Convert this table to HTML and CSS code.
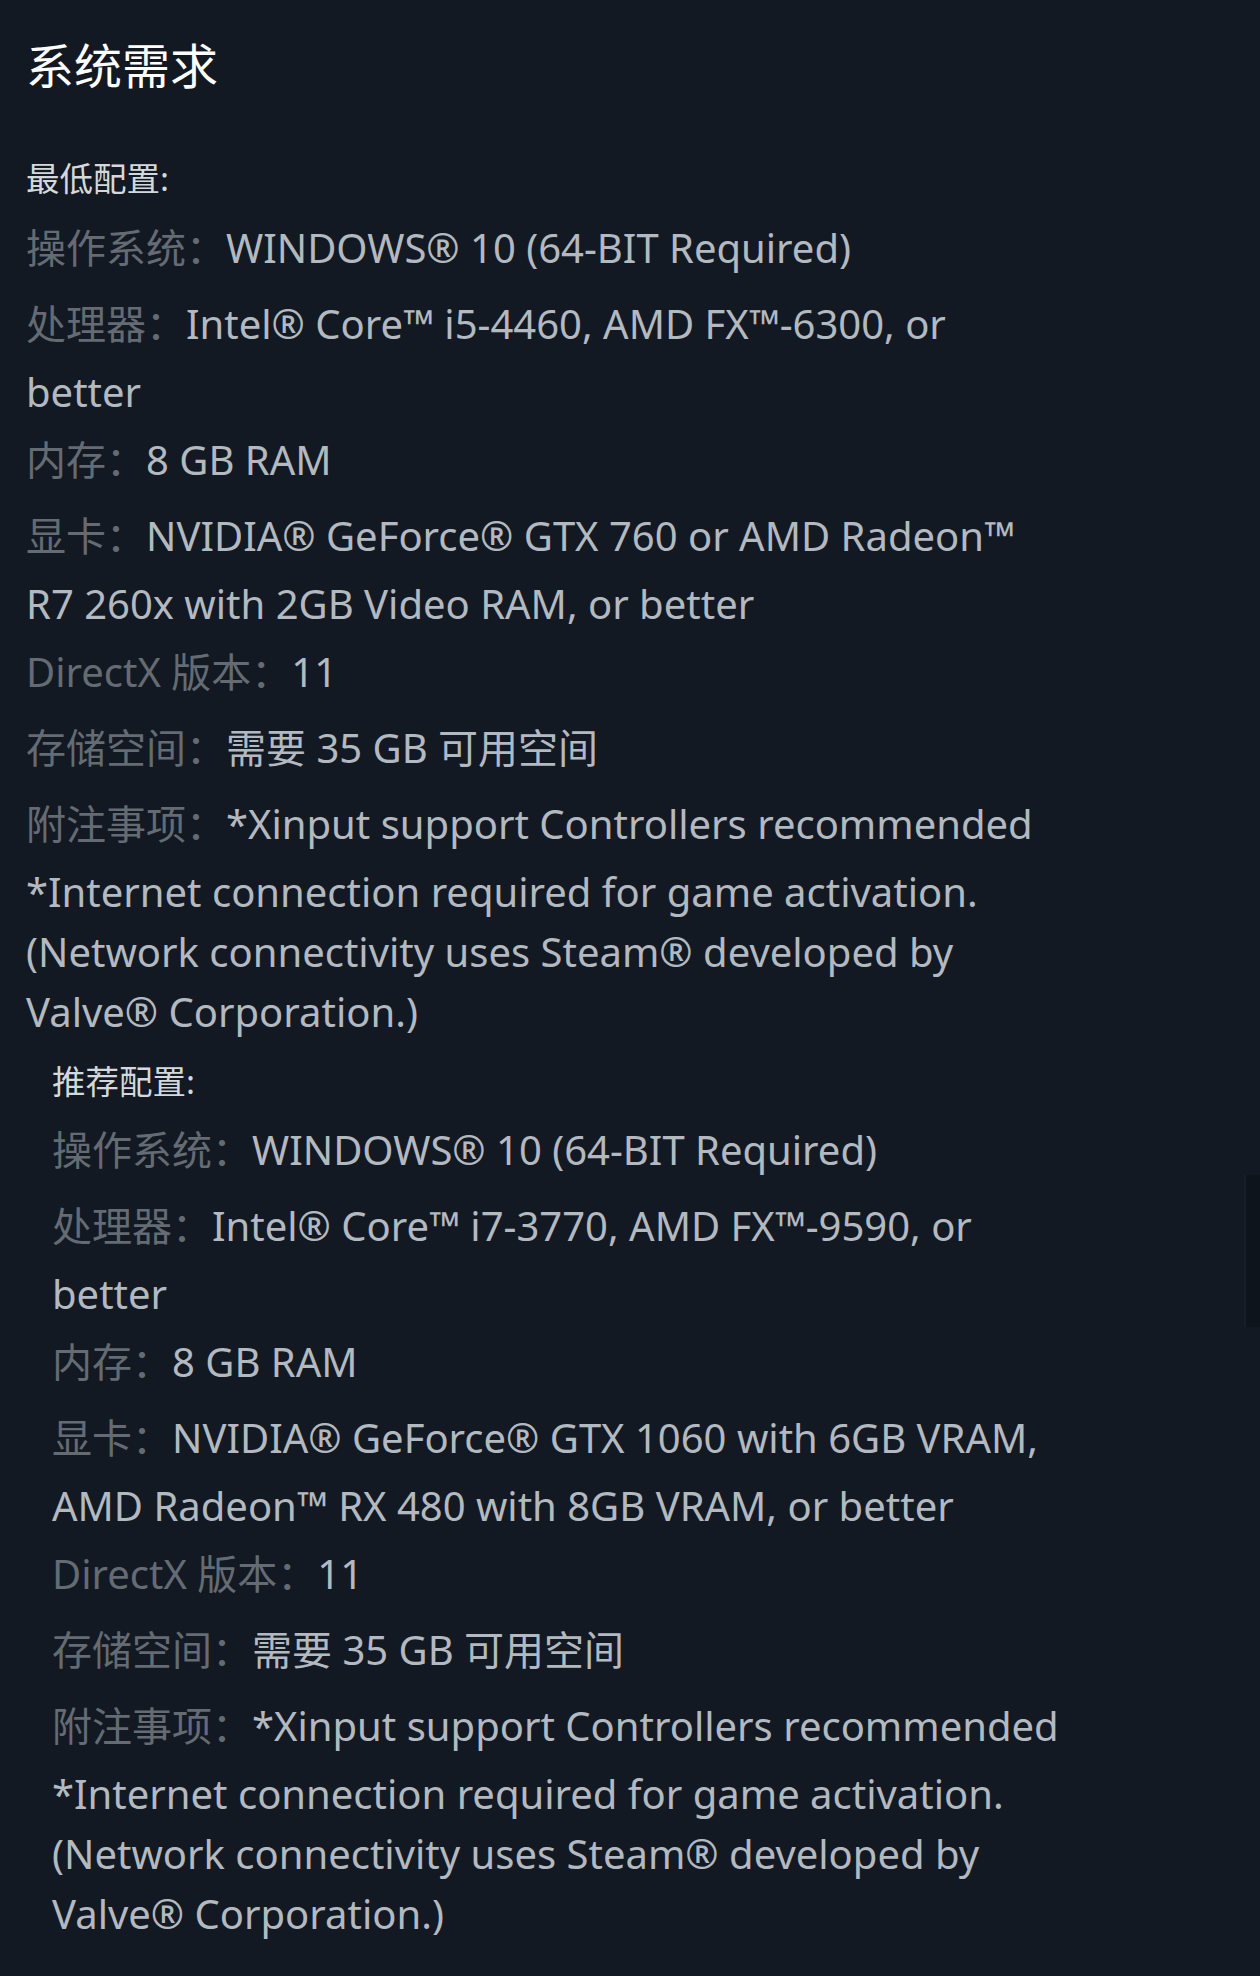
FILE: index.html
```html
<!DOCTYPE html>
<html lang="zh-CN">
<head>
<meta charset="utf-8">
<title>系统需求</title>
<link rel="stylesheet" href="styles.css">
</head>
<body>
<div class="sysreq">
  <h2 class="title">系统需求</h2>
  <section class="req">
    <div class="req-head">最低配置:</div>
    <ul class="req-list">
      <li><span class="label">操作系统：</span>WINDOWS® 10 (64-BIT Required)</li>
      <li><span class="label">处理器：</span>Intel® Core™ i5-4460, AMD FX™-6300, or better</li>
      <li><span class="label">内存：</span>8 GB RAM</li>
      <li><span class="label">显卡：</span>NVIDIA® GeForce® GTX 760 or AMD Radeon™ R7 260x with 2GB Video RAM, or better</li>
      <li><span class="label">DirectX 版本：</span>11</li>
      <li><span class="label">存储空间：</span>需要 35 GB 可用空间</li>
      <li><span class="label">附注事项：</span>*Xinput support Controllers recommended<br>*Internet connection required for game activation. (Network connectivity uses Steam® developed by Valve® Corporation.)</li>
    </ul>
  </section>
  <section class="req req-rec">
    <div class="req-head">推荐配置:</div>
    <ul class="req-list">
      <li><span class="label">操作系统：</span>WINDOWS® 10 (64-BIT Required)</li>
      <li><span class="label">处理器：</span>Intel® Core™ i7-3770, AMD FX™-9590, or better</li>
      <li><span class="label">内存：</span>8 GB RAM</li>
      <li><span class="label">显卡：</span>NVIDIA® GeForce® GTX 1060 with 6GB VRAM, AMD Radeon™ RX 480 with 8GB VRAM, or better</li>
      <li><span class="label">DirectX 版本：</span>11</li>
      <li><span class="label">存储空间：</span>需要 35 GB 可用空间</li>
      <li><span class="label">附注事项：</span>*Xinput support Controllers recommended<br>*Internet connection required for game activation. (Network connectivity uses Steam® developed by Valve® Corporation.)</li>
    </ul>
  </section>
</div>
<div class="scroll-thumb"></div>
</body>
</html>
```
FILE: styles.css
```css
html {
  background: #131922;
}
body {
  margin: 0;
  min-height: 1976px;
  background: #131922;
  font-family: "Noto Sans", "Noto Sans CJK SC", sans-serif;
  position: relative;
}
.sysreq {
  padding: 36px 210px 0 26px;
}
.title {
  margin: 0;
  font-size: 48px;
  line-height: 60px;
  font-weight: 400;
  color: #ffffff;
}
.req-head {
  margin-top: 62px;
  font-size: 33.5px;
  line-height: 40px;
  color: #d3d8dd;
}
.req-rec {
  margin-left: 26px;
  margin-right: -26px;
}
.req-rec .req-head {
  margin-top: 19px;
}
.req-list {
  list-style: none;
  margin: 12px 0 0 0;
  padding: 0;
}
.req-rec .req-list {
  margin-top: 11px;
}
.req-list li {
  font-size: 40px;
  line-height: 60px;
  color: #b3b9c0;
}
.label {
  display: inline-block;
  line-height: 76px;
  color: #646b73;
}
.scroll-thumb {
  position: absolute;
  right: 0;
  top: 1175px;
  width: 14px;
  height: 152px;
  background: #0e141b;
  border-left: 2px solid #171e27;
}
```
